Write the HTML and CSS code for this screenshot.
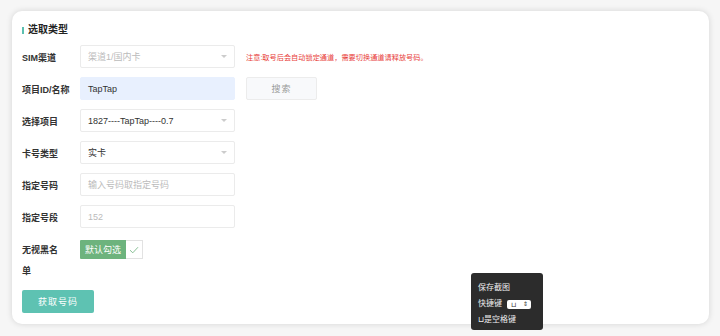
FILE: index.html
```html
<!DOCTYPE html>
<html lang="zh-CN">
<head>
    <meta charset="utf-8" />
    <meta name="viewport" content="width=device-width, initial-scale=1" />
    <title>选取类型</title>
    <link rel="stylesheet" href="styles.css">
</head>
<body>
    <div class="card">
        <h2 class="title">选取类型</h2>

        <div class="form">
            <div class="row">
                <label class="label">SIM渠道</label>
                <div class="select disabled">
                    <span class="placeholder">渠道1/国内卡</span>
                    <span class="arrow"></span>
                </div>
                <span class="note">注意:取号后会自动锁定通道，需要切换通道请释放号码。</span>
            </div>

            <div class="row">
                <label class="label">项目ID/名称</label>
                <div class="input filled">TapTap</div>
                <button class="search-btn">搜索</button>
            </div>

            <div class="row">
                <label class="label">选择项目</label>
                <div class="select">
                    <span>1827----TapTap----0.7</span>
                    <span class="arrow"></span>
                </div>
            </div>

            <div class="row">
                <label class="label">卡号类型</label>
                <div class="select">
                    <span>实卡</span>
                    <span class="arrow"></span>
                </div>
            </div>

            <div class="row">
                <label class="label">指定号码</label>
                <div class="input"><span class="placeholder">输入号码取指定号码</span></div>
            </div>

            <div class="row">
                <label class="label">指定号段</label>
                <div class="input"><span class="placeholder">152</span></div>
            </div>

            <div class="row row-check">
                <label class="label label-wrap">无视黑名单</label>
                <div class="check">
                    <span class="check-text">默认勾选</span>
                    <span class="check-box">
                        <svg width="10" height="8" viewBox="0 0 10 8"><path d="M1 4.2 L3.8 6.8 L9 1.2" fill="none" stroke="#7cb98a" stroke-width="0.9"/></svg>
                    </span>
                </div>
            </div>

            <button class="submit-btn">获取号码</button>
        </div>
    </div>

    <div class="tooltip">
        <div>保存截图</div>
        <div class="tip-row">快捷键 <span class="key">⊔ <span class="key-arrows">⇕</span></span></div>
        <div>⊔是空格键</div>
    </div>
</body>
</html>
```

FILE: styles.css
```css
body {
    margin: 0;
    padding: 11px 11px 12px 12px;
    background: #f6f6f6;
    font-family: "Liberation Sans", "Noto Sans CJK SC", sans-serif;
    color: #333;
    position: relative;
}
.card {
    height: 313px;
    box-sizing: border-box;
    background: #fff;
    border-radius: 10px;
    box-shadow: 0 0 6px rgba(0, 0, 0, 0.14);
    padding: 12px 10px 0 10px;
}
.title {
    margin: 0 0 8px 0;
    font-size: 10px;
    line-height: 14px;
    font-weight: bold;
    color: #222;
    display: flex;
    align-items: center;
}
.title::before {
    content: "";
    width: 2px;
    height: 7px;
    background: #5cc0b0;
    margin-right: 4px;
}
.form {
    display: flex;
    flex-direction: column;
    gap: 9px;
}
.row {
    display: flex;
    align-items: center;
    height: 23px;
}
.label {
    width: 58px;
    font-size: 9px;
    font-weight: bold;
    color: #333;
    flex-shrink: 0;
    padding-top: 1px;
}
.select, .input {
    width: 155px;
    height: 23px;
    box-sizing: border-box;
    border: 1px solid #ebebeb;
    border-radius: 2px;
    padding: 0 7px;
    display: flex;
    align-items: center;
    justify-content: space-between;
    font-size: 9px;
    color: #333;
    background: #fff;
}
.input.filled {
    background: #e8f0fe;
    border-color: #e8f0fe;
}
.placeholder {
    color: #bbb;
}
.arrow {
    width: 0;
    height: 0;
    border-left: 3px solid transparent;
    border-right: 3px solid transparent;
    border-top: 3px solid #ccc;
}
.note {
    margin-left: 11px;
    font-size: 7.2px;
    color: #e8403a;
}
.search-btn {
    margin-left: 11px;
    width: 71px;
    height: 23px;
    border: 1px solid #ececec;
    border-radius: 2px;
    background: #f8f9fb;
    color: #999;
    font-size: 9px;
    font-family: inherit;
    letter-spacing: 1px;
    padding: 0;
}
.row-check {
    align-items: flex-start;
    height: 41px;
    margin-top: 3px;
}
.label-wrap {
    width: 40px;
    margin-right: 18px;
    line-height: 21px;
    padding-top: 0;
}
.check {
    display: flex;
    height: 19px;
}
.check-text {
    width: 46px;
    background: #6db37d;
    color: #fff;
    font-size: 9px;
    display: flex;
    align-items: center;
    justify-content: center;
    border-radius: 1px 0 0 1px;
}
.check-box {
    width: 17px;
    box-sizing: border-box;
    border: 1px solid #e2e2e2;
    border-left: none;
    display: flex;
    align-items: center;
    justify-content: center;
}
.submit-btn {
    width: 72px;
    height: 23px;
    border: none;
    border-radius: 2px;
    background: #5ec2b2;
    color: #fff;
    font-size: 9px;
    font-family: inherit;
    letter-spacing: 1px;
    padding: 0;
}
.tooltip {
    position: absolute;
    left: 471px;
    top: 273px;
    width: 72px;
    height: 57px;
    box-sizing: border-box;
    background: #2c2c2c;
    border-radius: 3px;
    padding: 7px 0 0 7px;
    color: #eee;
    font-size: 8px;
    line-height: 16px;
}
.tip-row {
    display: flex;
    align-items: center;
    gap: 5px;
}
.key {
    background: #fff;
    color: #333;
    border-radius: 2px;
    font-size: 7px;
    line-height: 9px;
    padding: 0 3px 0 4px;
    width: 24px;
    box-sizing: border-box;
    display: flex;
    justify-content: space-between;
}
.key-arrows {
    font-size: 6px;
}
```
